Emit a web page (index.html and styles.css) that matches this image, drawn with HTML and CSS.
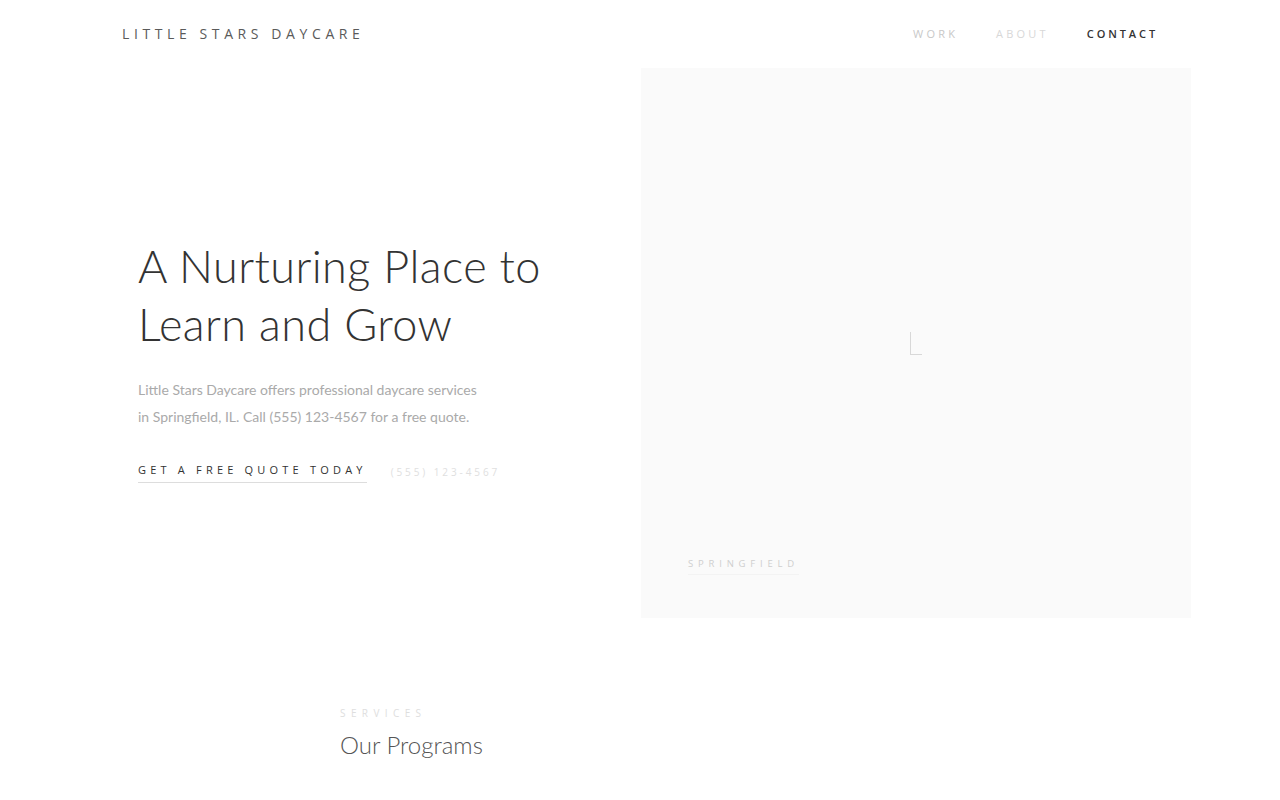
FILE: index.html
```html
<!DOCTYPE html>
<html lang="en">
<head>
<meta charset="utf-8">
<title>Little Stars Daycare</title>
<link rel="stylesheet" href="styles.css">
</head>
<body>
<header class="site-header">
  <div class="logo">LITTLE STARS DAYCARE</div>
  <nav class="nav">
    <a class="nav-link nav-work" href="#">WORK</a>
    <a class="nav-link nav-about" href="#">ABOUT</a>
    <a class="nav-link nav-contact" href="#">CONTACT</a>
  </nav>
</header>
<section class="hero">
  <div class="hero-text">
    <h1 class="hero-title">A Nurturing Place to Learn and Grow</h1>
    <p class="hero-lead">Little Stars Daycare offers professional daycare services in Springfield, IL. Call (555) 123-4567 for a free quote.</p>
    <div class="hero-actions">
      <a class="cta" href="#">GET A FREE QUOTE TODAY</a>
      <span class="phone">(555) 123-4567</span>
    </div>
  </div>
  <div class="hero-panel">
    <div class="panel-mark"></div>
    <div class="panel-label">SPRINGFIELD</div>
  </div>
</section>
<section class="services">
  <div class="eyebrow">SERVICES</div>
  <h2 class="section-title">Our Programs</h2>
</section>
</body>
</html>
```

FILE: styles.css
```css
* { box-sizing: border-box; }
html, body { margin: 0; padding: 0; background: #fff; }
body { font-family: "Lato", "Open Sans", sans-serif; color: #333; }

.site-header {
  height: 68px;
  display: flex;
  align-items: center;
  justify-content: space-between;
  padding: 0 122px 2px 122px;
}
.logo {
  font-family: "Open Sans", sans-serif;
  font-size: 14px;
  letter-spacing: 4.6px;
  color: #5a5a5a;
  font-weight: 400;
}
.nav { display: flex; gap: 38px; }
.nav-link {
  font-family: "Open Sans", sans-serif;
  font-size: 11px;
  letter-spacing: 3.2px;
  text-decoration: none;
}
.nav-work { color: #c8c8c8; }
.nav-about { color: #d8d8d8; }
.nav-contact { color: #333; font-weight: 600; letter-spacing: 2.9px; }

.hero { display: flex; align-items: stretch; }
.hero-text {
  width: 641px;
  flex-shrink: 0;
  padding-left: 138px;
  padding-top: 169px;
}
.hero-title {
  margin: 0;
  font-family: "Lato", sans-serif;
  font-weight: 300;
  font-size: 45px;
  line-height: 58px;
  color: #333;
  letter-spacing: 0.4px;
}
.hero-lead {
  margin: 23px 0 0;
  width: 345px;
  font-family: "Lato", sans-serif;
  font-size: 14px;
  line-height: 27px;
  color: #aaa;
}
.hero-actions { margin-top: 32px; display: flex; align-items: baseline; gap: 24px; }
.cta {
  font-family: "Open Sans", sans-serif;
  font-size: 11px;
  letter-spacing: 4.2px;
  color: #333;
  text-decoration: none;
  padding-bottom: 5px;
  border-bottom: 1px solid #ddd;
  font-weight: 500;
}
.phone {
  font-family: "Open Sans", sans-serif;
  font-size: 10px;
  letter-spacing: 2.9px;
  color: #e0e0e0;
  position: relative;
  top: 2px;
}

.hero-panel {
  width: 550px;
  height: 550px;
  flex-shrink: 0;
  background: #fafafa;
  display: flex;
  align-items: center;
  justify-content: center;
  position: relative;
}
.panel-mark {
  width: 12px;
  height: 23px;
  border-left: 1px solid #d8d8d8;
  border-bottom: 1px solid #d8d8d8;
}
.panel-label {
  position: absolute;
  left: 47px;
  bottom: 43px;
  font-family: "Open Sans", sans-serif;
  font-size: 9.5px;
  letter-spacing: 4.8px;
  color: #cfcfcf;
  padding-bottom: 4px;
  border-bottom: 1px solid #f3f3f3;
}

.services { padding: 88px 0 40px 340px; }
.eyebrow {
  font-family: "Open Sans", sans-serif;
  font-size: 10px;
  letter-spacing: 5.4px;
  color: #dedede;
}
.section-title {
  margin: 10px 0 0;
  font-family: "Lato", sans-serif;
  font-weight: 300;
  font-size: 24px;
  color: #555;
}
```
